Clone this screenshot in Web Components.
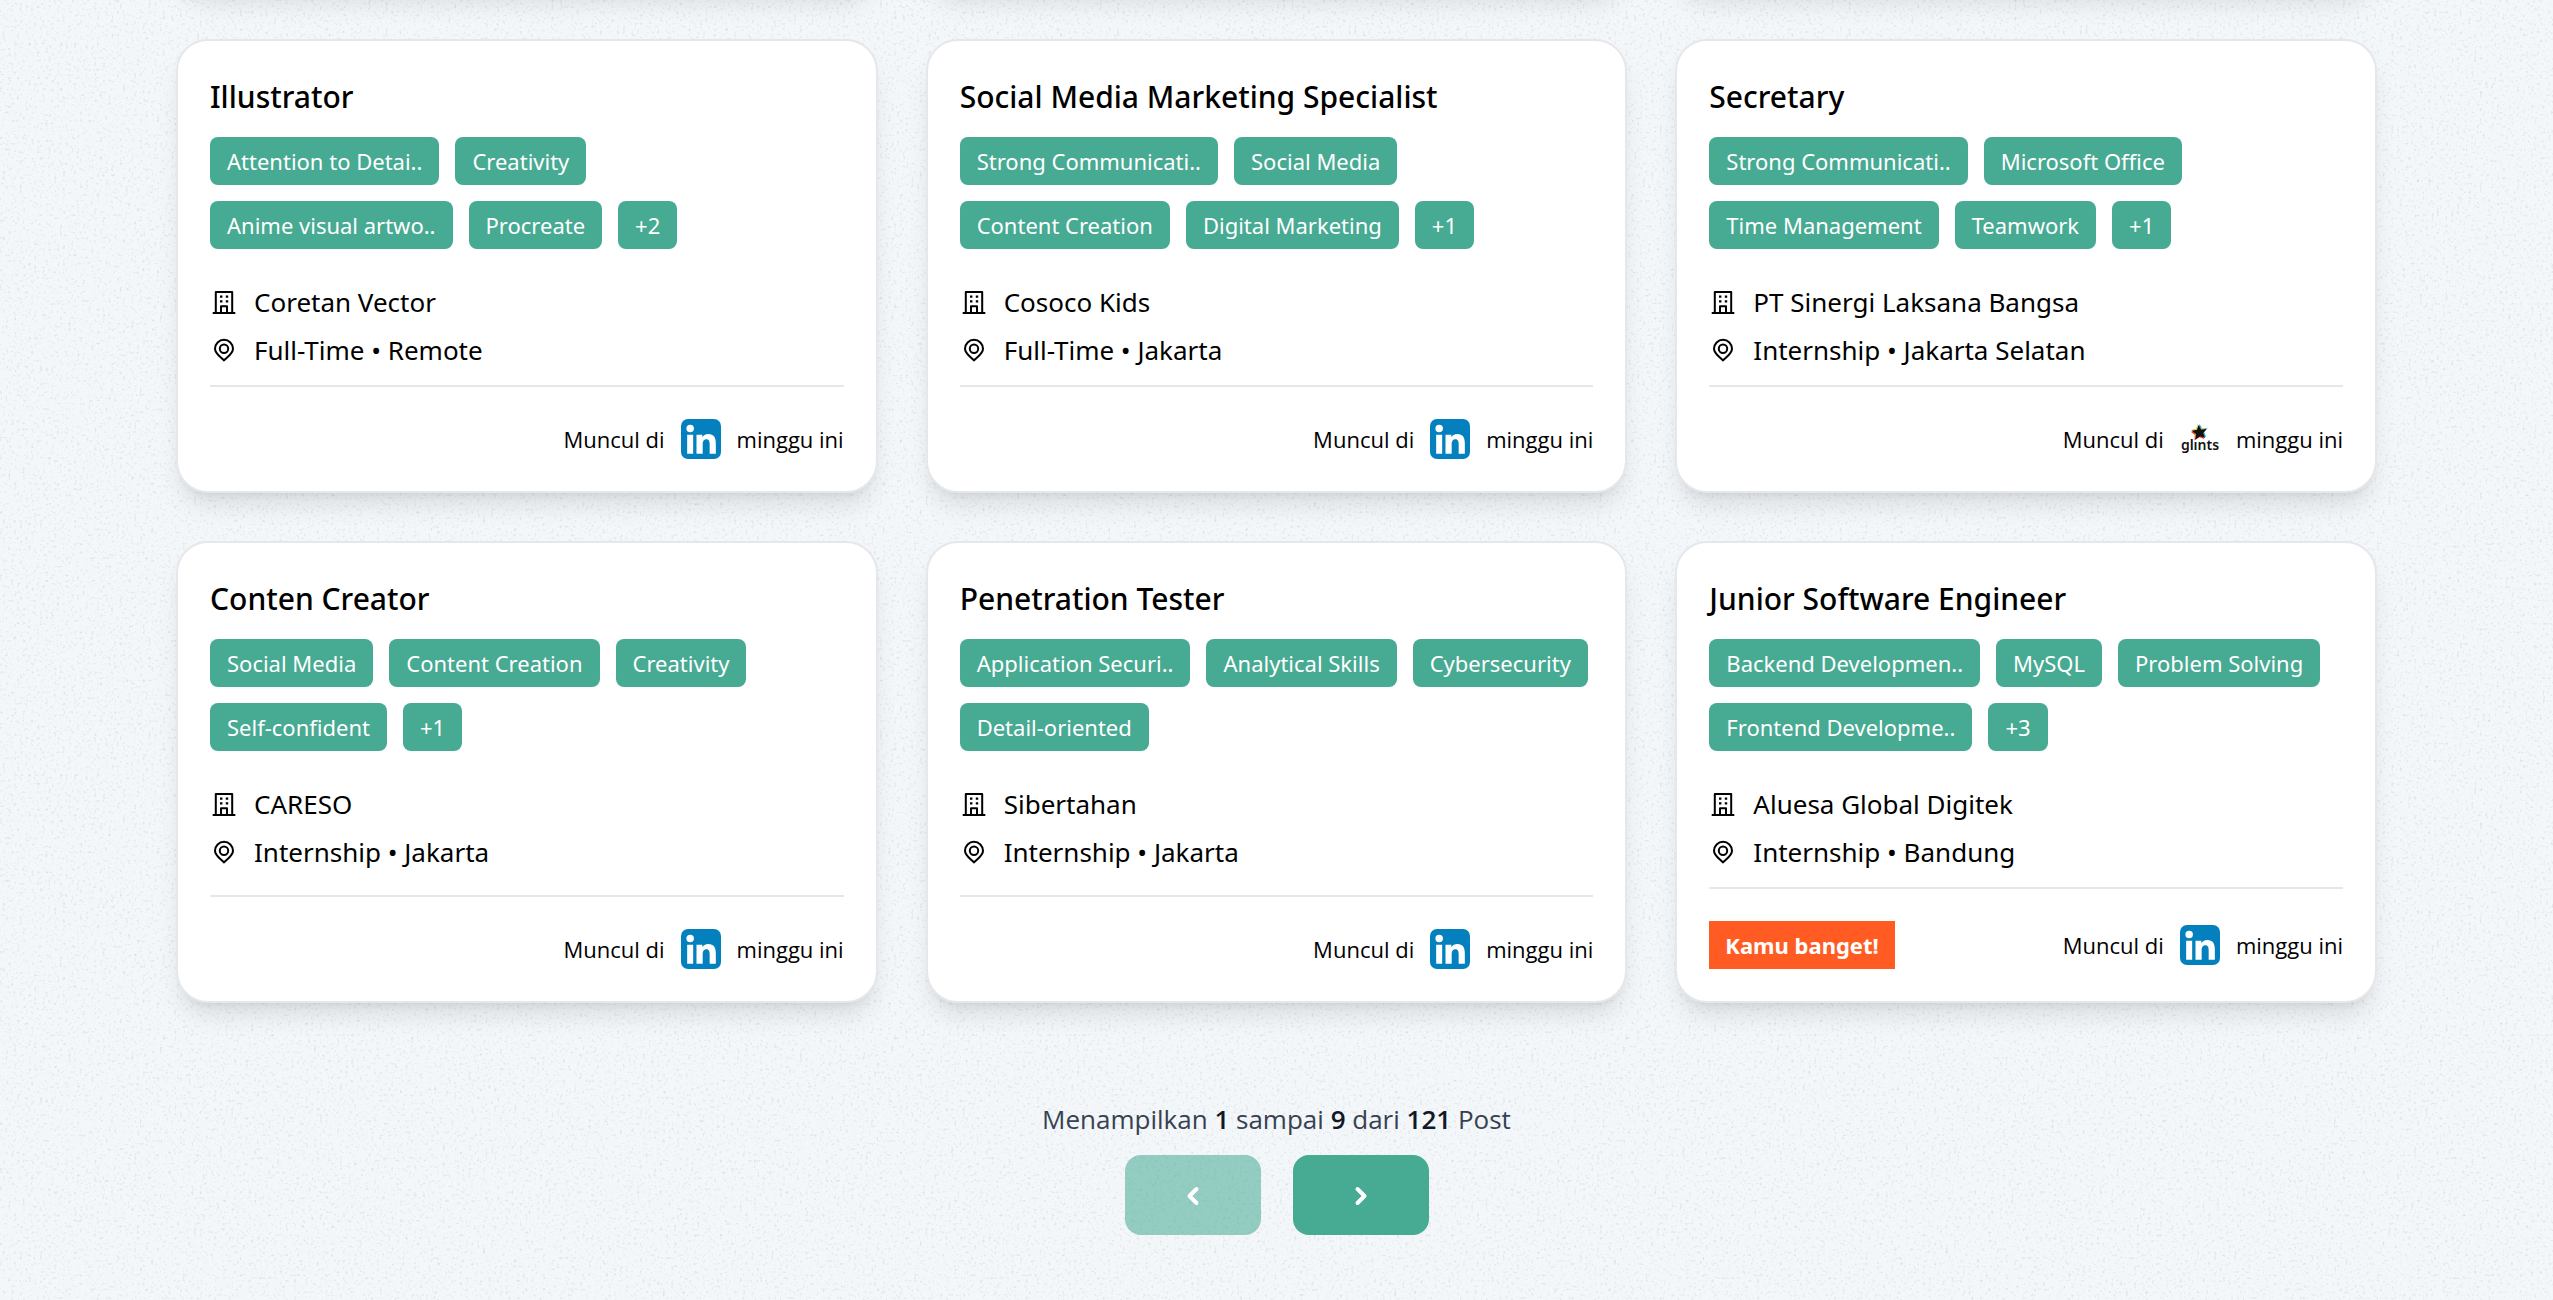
<!DOCTYPE html>
<html lang="id">
<head>
<meta charset="utf-8">
<title>Lowongan</title>
<style>
  html, body { margin: 0; min-height: 100%; }
  body {
    background: #f3f7fa;
    color: #000;
    font-family: "Noto Sans", "Open Sans", sans-serif;
    overflow-x: hidden;
  }
</style>
</head>
<body>
<job-board>
  <job-card blank></job-card>
  <job-card blank></job-card>
  <job-card blank></job-card>

  <job-card heading="Illustrator" company="Coretan Vector" place="Full-Time • Remote" source="linkedin">
    <skill-tag>Attention to Detai..</skill-tag><skill-tag>Creativity</skill-tag><skill-tag>Anime visual artwo..</skill-tag><skill-tag>Procreate</skill-tag><skill-tag>+2</skill-tag>
  </job-card>
  <job-card heading="Social Media Marketing Specialist" company="Cosoco Kids" place="Full-Time • Jakarta" source="linkedin">
    <skill-tag>Strong Communicati..</skill-tag><skill-tag>Social Media</skill-tag><skill-tag>Content Creation</skill-tag><skill-tag>Digital Marketing</skill-tag><skill-tag>+1</skill-tag>
  </job-card>
  <job-card heading="Secretary" company="PT Sinergi Laksana Bangsa" place="Internship • Jakarta Selatan" source="glints">
    <skill-tag>Strong Communicati..</skill-tag><skill-tag>Microsoft Office</skill-tag><skill-tag>Time Management</skill-tag><skill-tag>Teamwork</skill-tag><skill-tag>+1</skill-tag>
  </job-card>

  <job-card heading="Conten Creator" company="CARESO" place="Internship • Jakarta" source="linkedin">
    <skill-tag>Social Media</skill-tag><skill-tag>Content Creation</skill-tag><skill-tag>Creativity</skill-tag><skill-tag>Self-confident</skill-tag><skill-tag>+1</skill-tag>
  </job-card>
  <job-card heading="Penetration Tester" company="Sibertahan" place="Internship • Jakarta" source="linkedin">
    <skill-tag>Application Securi..</skill-tag><skill-tag>Analytical Skills</skill-tag><skill-tag>Cybersecurity</skill-tag><skill-tag>Detail-oriented</skill-tag>
  </job-card>
  <job-card heading="Junior Software Engineer" company="Aluesa Global Digitek" place="Internship • Bandung" source="linkedin">
    <skill-tag>Backend Developmen..</skill-tag><skill-tag>MySQL</skill-tag><skill-tag>Problem Solving</skill-tag><skill-tag>Frontend Developme..</skill-tag><skill-tag>+3</skill-tag>
    <match-badge slot="badge">Kamu banget!</match-badge>
  </job-card>

  <page-nav slot="nav" from="1" to="9" total="121"></page-nav>
</job-board>

<script>
const define = (name, markup, setup) => {
  const template = document.createElement('template');
  template.innerHTML = markup;
  customElements.define(name, class extends HTMLElement {
    constructor() {
      super();
      this.attachShadow({ mode: 'open' }).append(template.content.cloneNode(true));
    }
    connectedCallback() { if (setup) setup(this, this.shadowRoot); }
  });
};

define('skill-tag', `
  <style>
    :host { display: block; background: #47aa92; color: #fff; border-radius: 8px;
            padding: 0 17px; font-size: 22px; line-height: 48px; white-space: nowrap; }
  </style><slot></slot>`);

define('match-badge', `
  <style>
    :host { display: block; background: #ff5b22; color: #fff; padding: 0 16px;
            font-size: 22px; font-weight: 700; line-height: 48px; white-space: nowrap; }
  </style><slot></slot>`);

define('building-icon', `
  <style>:host { display: block; width: 28px; height: 28px; } svg { display: block; }</style>
  <svg width="28" height="28" viewBox="0 0 28 28" fill="none" stroke="currentColor" stroke-width="2" aria-hidden="true">
    <path d="M5.8 25V4h16.4v21M2.7 25h22.6M11 25v-6.8h6V25" stroke-linejoin="round"/>
    <path d="M10 8.6h2.4M15.8 8.6h2.4M10 13.4h2.4M15.8 13.4h2.4" stroke-width="2.2"/>
  </svg>`);

define('pin-icon', `
  <style>:host { display: block; width: 28px; height: 28px; } svg { display: block; }</style>
  <svg width="28" height="28" viewBox="0 0 28 28" fill="none" stroke="currentColor" stroke-width="2" aria-hidden="true">
    <path d="M14 24.4C11.4 21.2 5 18.2 5 12.8a9 9 0 0 1 18 0c0 5.4-6.4 8.4-9 11.6Z" stroke-linejoin="round"/>
    <circle cx="14" cy="12.8" r="4.2"/>
  </svg>`);

define('linkedin-logo', `
  <style>:host { display: block; width: 40px; height: 40px; } svg { display: block; }</style>
  <svg width="40" height="40" viewBox="0 0 24 24" role="img" aria-label="LinkedIn">
    <rect width="24" height="24" rx="4.2" fill="#0580be"/>
    <path fill="#fff" d="M20.9 20.8h-3.7v-5.6c0-1.5-.3-3-1.9-3-1.7 0-2.3 1.3-2.3 3v5.6H9.3V9.400h3.500v1.500c.6-1 1.800-1.900 3.500-1.900 3.500 0 4.600 2.300 4.600 5.700zM5.500 7.900a2.250 2.250 0 1 1 0-4.500 2.250 2.250 0 0 1 0 4.500zM7.300 20.800H3.700V9.400h3.600z"/>
  </svg>`);

define('glints-logo', `
  <style>
    :host { display: block; width: 40px; height: 40px; } svg { display: block; }
    text { font: 600 14px "Noto Sans", "Open Sans", sans-serif; }
  </style>
  <svg width="40" height="40" viewBox="0 0 40 40" role="img" aria-label="glints">
    <defs><path id="star" d="M18.600 6l2.500 4.600 5.500-.6-3.400 4 2 5-5-1.700-4.800 3.100.4-5.300-4-3.300 5.200-1z"/></defs>
    <use href="#star" x="1" y="-1" fill="#19b5f0"/>
    <use href="#star" x="-1" y="1" fill="#f03c3c"/>
    <use href="#star" x="-1" y="-1" fill="#f7d046"/>
    <use href="#star" fill="#111"/>
    <text x="20" y="31" text-anchor="middle" fill="#111">glınts</text>
  </svg>`);

define('job-card', `
  <style>
    :host { display: flex; flex-direction: column; box-sizing: border-box; min-width: 0;
            background: #fff; border: 2px solid #e5e7eb; border-radius: 32px; padding: 32px;
            box-shadow: 0 17px 25px -5px rgba(0,0,0,.1), 0 7px 10px -7px rgba(0,0,0,.1); }
    h2 { margin: 0 0 16px; font-size: 30px; font-weight: 500; line-height: 48px; }
    .tags { display: flex; flex-wrap: wrap; gap: 16px; margin-bottom: 29px; }
    .info { display: flex; align-items: center; gap: 16px; font-size: 26px; line-height: 48px; }
    footer { margin-top: auto; }
    hr { border: 0; height: 2px; background: #e5e7eb; margin: 11px 0 32px; }
    .row { display: flex; align-items: center; justify-content: space-between; }
    .seen { display: flex; align-items: center; gap: 16px; margin-left: auto;
            font-family: "Open Sans", "Noto Sans", sans-serif; font-size: 22px; line-height: 32px; }
  </style>
  <h2></h2>
  <div class="tags"><slot></slot></div>
  <div class="info"><building-icon></building-icon><span class="company"></span></div>
  <div class="info"><pin-icon></pin-icon><span class="place"></span></div>
  <footer>
    <hr>
    <div class="row">
      <slot name="badge"></slot>
      <div class="seen"><span>Muncul di</span><span class="logo"></span><span>minggu ini</span></div>
    </div>
  </footer>`,
  (host, root) => {
    if (host.hasAttribute('blank')) {
      root.querySelectorAll(':not(style)').forEach(n => n.remove());
      return;
    }
    root.querySelector('h2').textContent = host.getAttribute('heading');
    root.querySelector('.company').textContent = host.getAttribute('company');
    root.querySelector('.place').textContent = host.getAttribute('place');
    root.querySelector('.logo').replaceChildren(document.createElement(host.getAttribute('source') + '-logo'));
  });

define('page-nav', `
  <style>
    :host { display: flex; flex-direction: column; align-items: center; gap: 16px; padding: 96px 0 64px; }
    p { margin: 0; font-family: "Open Sans", "Noto Sans", sans-serif; font-size: 26px; line-height: 40px; color: #374151; }
    b { font-weight: 600; color: #111827; }
    nav { display: flex; gap: 32px; }
    button { display: flex; align-items: center; justify-content: center; width: 136px; height: 80px;
             border: 0; border-radius: 16px; background: #47aa92; color: #fff; padding: 0; }
    button:disabled { background: rgba(71,170,146,.56); }
  </style>
  <p>Menampilkan <b class="from"></b> sampai <b class="to"></b> dari <b class="total"></b> Post</p>
  <nav aria-label="Halaman">
    <button type="button" disabled aria-label="Sebelumnya"><svg width="28" height="28" viewBox="0 0 28 28" fill="none" stroke="#fff" stroke-width="4" stroke-linecap="round" stroke-linejoin="round"><path d="M17.500 8l-7 7 7 7"/></svg></button>
    <button type="button" aria-label="Berikutnya"><svg width="28" height="28" viewBox="0 0 28 28" fill="none" stroke="#fff" stroke-width="4" stroke-linecap="round" stroke-linejoin="round"><path d="M10.500 8l7 7-7 7"/></svg></button>
  </nav>`,
  (host, root) => ['from', 'to', 'total'].forEach(k => root.querySelector('.' + k).textContent = host.getAttribute(k)));

define('job-board', `
  <style>
    :host { display: block; position: relative; overflow: hidden; min-height: 100vh; }
    .grain { position: absolute; inset: 0; width: 100%; height: 100%; pointer-events: none; }
    main { position: relative; }
    .grid { display: grid; grid-template-columns: repeat(3, minmax(0, 1fr)); gap: 48px;
            grid-template-rows: 80px; margin-top: -89px; padding: 0 176px; }
  </style>
  <svg class="grain" aria-hidden="true">
    <filter id="g" x="0" y="0" width="100%" height="100%">
      <feTurbulence type="fractalNoise" baseFrequency=".35" numOctaves="3" seed="4"/>
      <feColorMatrix values="0 0 0 0 .45  0 0 0 0 .47  0 0 0 0 .5  0 0 0 1.100 -.62"/>
    </filter>
    <rect width="100%" height="100%" filter="url(#g)"/>
  </svg>
  <main><div class="grid"><slot></slot></div><slot name="nav"></slot></main>`);
</script>
</body>
</html>
